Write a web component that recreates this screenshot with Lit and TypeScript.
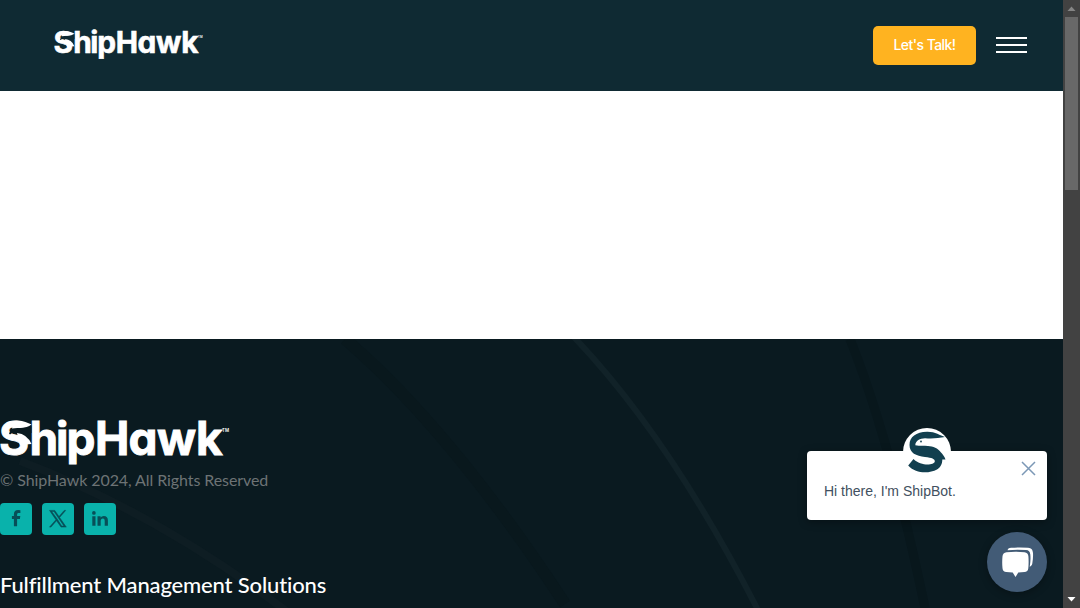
import { LitElement, html, css, svg } from "lit";
import { customElement } from "lit/decorators.js";

@customElement("ship-logo")
class ShipLogo extends LitElement {
  static styles = css`
    :host { display: block; }
    svg { display: block; width: 100%; height: auto; overflow: visible; }
    .word { font-family: Inter, "Liberation Sans", sans-serif; font-weight: 700; font-size: 46px; font-feature-settings: "cv11"; fill: #fff; stroke: #fff; stroke-width: 0.9px; }
    .tm { font-family: Inter, "Liberation Sans", sans-serif; font-weight: 600; font-size: 4.4px; fill: #fff; }
    .cut { fill: var(--logo-bg); }
    .mark { fill: #fff; }
  `;
  render() {
    return html`<svg viewBox="0 0 228 47">
      <text class="word" y="35.500" x="-1 29.500 56 66.500 95 128.500 157 196">ShipHawk</text>
      <path class="cut" d="M9 14.500C11 10 16 8.800 20 9L31.500 6.500L31.500 14H23Q18 12 13.500 13L10 15.500Z" />
      <path class="mark" d="M14 2C21 .2 27 3.500 31.500 5.600Q27 9 20 8.800L12 9.500Z" />
      <path class="mark" d="M17 14Q27 15 31.500 25L20 26Z" />
      <text class="tm" x="222" y="12.500">TM</text>
    </svg>`;
  }
}

@customElement("chat-widget")
class ChatWidget extends LitElement {
  static styles = css`
    :host { display: flex; flex-direction: column; align-items: flex-end; gap: 12px; }
    .card { position: relative; box-sizing: border-box; width: 240px; height: 69px; border-radius: 4px; background: #fff; padding: 31px 17px 0; box-shadow: 0 2px 8px rgba(0, 0, 0, 0.35); font: 14px/18px "Liberation Sans", Arial, sans-serif; color: #425060; }
    .avatar { position: absolute; left: 96px; top: -23px; width: 48px; height: 48px; }
    .close { position: absolute; right: 11px; top: 10px; width: 15px; height: 15px; }
    .launcher { display: grid; width: 60px; height: 60px; border-radius: 50%; background: #425b76; box-shadow: 0 2px 8px rgba(0, 0, 0, 0.3); }
    svg { display: block; }
  `;
  render() {
    return html`
      <div class="card">
        <svg class="avatar" viewBox="0 0 48 48">
          <circle cx="24" cy="24" r="24" fill="#fff" />
          <path fill="#123f4f" d="M42 9C37 7.500 32 3.600 24 3.800C13 4 6.500 9 6.500 17C6.500 25 13 28 22 29C29 29.800 32 31 31.800 33.500C31 37.500 18 38.500 10.500 31L5.200 37.500C13 46 26 45.700 34 41.500C38 39 39.300 35.500 39.300 31.500L42.500 31.500C41.500 28.500 39.500 26 38 24.500C35 20 30 18.500 25 18C21 17.600 17 18 12.300 17.200C12.500 12.500 17 10.300 22 10.200Q32 11 42 9Z" />
          <circle cx="18" cy="13.500" r=".9" fill="#123f4f" />
        </svg>
        <svg class="close" viewBox="0 0 15 15"><path d="M1 1L14 14M14 1L1 14" stroke="#7c98b6" stroke-width="1.500" /></svg>
        Hi there, I'm ShipBot.
      </div>
      <div class="launcher">
        <svg viewBox="0 0 60 60" fill="#fff">
          <path d="M20.500 18.200C21 16.400 22.500 15.900 24 15.800Q33 15 41 15.800C44.500 16.100 45.800 18 46 21Q46.300 26 45.300 31.500C45 33.200 44 34.300 42.700 34.800Q43.900 28 43.300 22.500C43 19.600 41.700 18.300 39 18.100Q30 17.500 20.500 18.200Z" />
          <path d="M19.500 20.200Q28.500 19.200 37.500 20.200C40 20.500 41.200 21.800 41.400 24.200Q41.900 30.300 41.300 36.200C41 38.700 39.800 39.900 37.500 40.100L31.300 40.600L28.500 45L25.700 40.600L19.300 40.100C17 39.900 15.800 38.700 15.500 36.200Q14.900 30.300 15.500 24.200C15.800 21.800 17 20.500 19.500 20.200Z" />
        </svg>
      </div>`;
  }
}

const SOCIAL = [
  svg`<path d="M17.100 23.200V16H19.900L20.300 13.100H17.100V11.600C17.100 10.600 17.500 9.900 18.800 9.900H20.400V7.300Q19.400 7.100 18.200 7.100C15.400 7.100 13.900 8.700 13.900 11.200V13.100H11.900V16H13.900V23.200Z" />`,
  svg`<path d="M17.600 14.400L23.700 7.400H22.200L17 13.500L12.800 7.400H7.500L13.900 16.700L7.500 24.100H9L14.500 17.700L19 24.100H24.300ZM15.600 16.600L9.700 8.500H12L21.900 23H19.700Z" stroke="#074f58" stroke-width=".5" />`,
  svg`<path d="M8.300 13.200H11.500V22.700H8.300ZM9.900 8.100A1.850 1.850 0 1 1 9.900 11.800A1.850 1.850 0 0 1 9.900 8.100ZM13.500 13.200H16.600V14.500Q17.600 12.900 19.700 12.900C22.600 12.900 23.900 14.600 23.900 17.300V22.700H20.700V17.900C20.700 16.500 20.200 15.600 18.900 15.600C17.500 15.600 16.700 16.500 16.700 18V22.700H13.500Z" />`,
];

@customElement("app-root")
class AppRoot extends LitElement {
  static styles = css`
    :host { display: grid; grid-template-columns: 1fr 17px; height: 608px; overflow: hidden; position: relative; background: #fff; font-family: Lato, "Liberation Sans", sans-serif; font-variant-ligatures: none; }
    .page { display: grid; grid-template-rows: 91px 248px 1fr; min-width: 0; min-height: 0; }
    header { display: flex; align-items: center; box-sizing: border-box; padding: 0 36px 1px 54px; background: #0f2a33; }
    .head-logo { width: 148px; margin-right: auto; --logo-bg: #0f2a33; }
    .talk { display: grid; place-items: center; box-sizing: border-box; width: 103px; height: 39px; padding-bottom: 2px; border-radius: 5px; background: #ffb320; color: #fff; font-weight: 500; font-size: 14px; font-family: Inter, sans-serif; letter-spacing: -0.55px; white-space: nowrap; }
    .menu { display: flex; flex-direction: column; gap: 5px; width: 31px; margin-left: 20px; }
    .menu i { height: 2px; background: #fff; }
    footer { position: relative; background: #0a1a20; overflow: hidden; box-sizing: border-box; padding-top: 80px; }
    .rays { position: absolute; inset: 0; width: 1063px; height: 269px; }
    .content { position: relative; }
    .foot-logo { width: 228px; --logo-bg: #0a1a20; }
    .copy { margin-top: 4px; font-size: 16px; line-height: 20px; letter-spacing: -0.08px; color: #6d7375; white-space: nowrap; }
    .social { display: flex; gap: 10px; margin-top: 13px; }
    .social svg { display: block; width: 32px; height: 32px; border-radius: 4px; background: #09b2ab; fill: #074f58; }
    h2 { margin: 36px 0 0; font-size: 22px; line-height: 28px; font-weight: 500; letter-spacing: -0.15px; color: #fff; white-space: nowrap; }
    .scroll { display: flex; flex-direction: column; align-items: center; background: #424242; }
    .scroll svg { display: block; width: 17px; height: 17px; }
    .thumb { width: 13px; height: 173px; background: #686868; margin-bottom: auto; }
    chat-widget { position: absolute; right: 33px; bottom: 16px; }
  `;
  render() {
    return html`
      <div class="page">
        <header>
          <ship-logo class="head-logo"></ship-logo>
          <div class="talk">Let's Talk!</div>
          <div class="menu"><i></i><i></i><i></i></div>
        </header>
        <main></main>
        <footer>
          <svg class="rays" viewBox="0 0 1063 269" fill="none">
            <path d="M572 -4Q670 98 760 275" stroke="#112228" stroke-width="6" />
            <path d="M20 122Q160 175 290 275" stroke="#0e1d23" stroke-width="8" />
            <path d="M345 0Q450 90 565 265" stroke="#09181d" stroke-width="12" />
            <path d="M850 0Q890 100 925 269" stroke="#08171c" stroke-width="9" />
          </svg>
          <div class="content">
            <ship-logo class="foot-logo"></ship-logo>
            <div class="copy">© ShipHawk 2024, All Rights Reserved</div>
            <div class="social">${SOCIAL.map((g) => html`<svg viewBox="0 0 32 32">${g}</svg>`)}</div>
            <h2>Fulfillment Management Solutions</h2>
          </div>
        </footer>
      </div>
      <div class="scroll">
        <svg viewBox="0 0 17 17"><path d="M4.500 11L8.500 6.500L12.500 11Z" fill="#858585" /></svg>
        <div class="thumb"></div>
        <svg viewBox="0 0 17 17"><path d="M4.500 6L8.500 10.500L12.500 6Z" fill="#fff" /></svg>
      </div>
      <chat-widget></chat-widget>`;
  }
}
